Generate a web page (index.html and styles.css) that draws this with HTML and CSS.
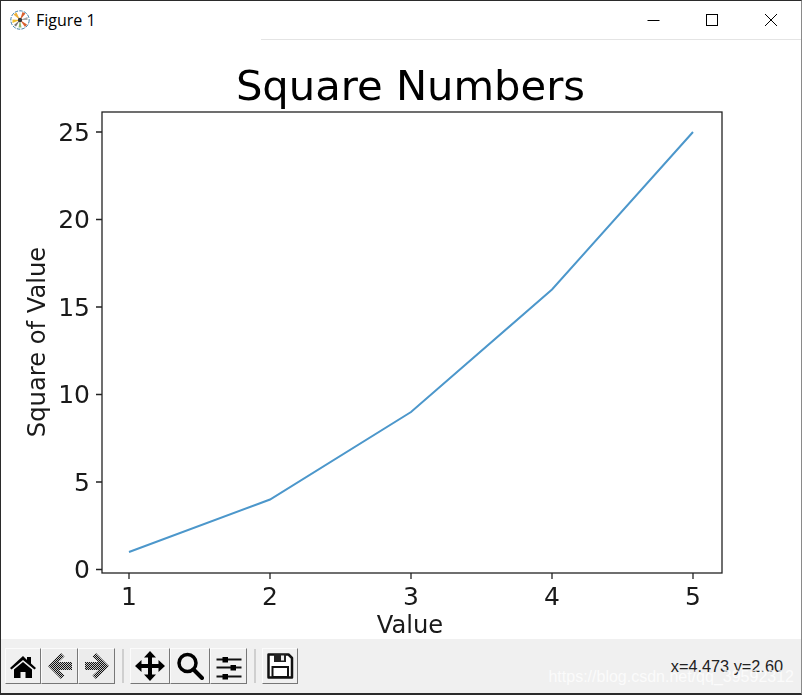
FILE: index.html
```html
<!DOCTYPE html>
<html lang="en">
<head>
<meta charset="utf-8">
<title>Figure 1</title>
<link rel="stylesheet" href="styles.css">
</head>
<body>
<div class="window">
  <header class="titlebar">
    <div class="title-left">
      <svg class="app-icon" width="20" height="20" viewBox="0 0 20 20">
        <circle cx="10" cy="10" r="9.200" fill="#fff" stroke="#3f7fa6" stroke-width="1" stroke-dasharray="3.500 1.200"/>
        <path d="M10 10L6.500 2.500L3.500 4.500Z" fill="#eeb23a"/>
        <path d="M10 10L12.500 2L15.500 3.500Z" fill="#d8602f"/>
        <path d="M10 10L2.500 9.500L2.500 13Z" fill="#f0c030"/>
        <path d="M10 10L17 14.500L15 17Z" fill="#d8602f"/>
        <path d="M10 10L11.500 17.500L8.500 17.500Z" fill="#8db86a"/>
        <path d="M10 10L17.500 7L17.500 10Z" fill="#a8a8a8"/>
        <path d="M10 10L4 15L6 16.500Z" fill="#777"/>
        <circle cx="10" cy="10" r="2.200" fill="#3a3a3a"/>
      </svg>
      <span class="title-text">Figure 1</span>
    </div>
    <div class="win-controls">
      <svg class="win-btn" width="14" height="14" viewBox="0 0 14 14"><path d="M1.500 7.500H13.500" stroke="#000" fill="none"/></svg>
      <svg class="win-btn" width="14" height="14" viewBox="0 0 14 14"><rect x="1.500" y="1.500" width="11" height="11" stroke="#000" fill="none"/></svg>
      <svg class="win-btn" width="14" height="14" viewBox="0 0 14 14"><path d="M1 1L13 13M13 1L1 13" stroke="#000" fill="none"/></svg>
    </div>
  </header>
  <main class="figure">
    <svg class="plot" width="800" height="599" viewBox="1 40 800 599">
      <text class="plot-title" x="410.500" y="100" text-anchor="middle">Square Numbers</text>
      <rect class="axes" x="102" y="112" width="620" height="461"/>
      <polyline class="series" points="129,552 270,499.500 411,412 552,289.500 693,132"/>
      <g class="ticks">
        <path d="M129 573v6M270 573v6M411 573v6M552 573v6M693 573v6"/>
        <path d="M102 569.500h-6M102 482h-6M102 394.500h-6M102 307h-6M102 219.500h-6M102 132h-6"/>
      </g>
      <g class="tick-label">
        <text x="129" y="605" text-anchor="middle">1</text>
        <text x="270" y="605" text-anchor="middle">2</text>
        <text x="411" y="605" text-anchor="middle">3</text>
        <text x="552" y="605" text-anchor="middle">4</text>
        <text x="693" y="605" text-anchor="middle">5</text>
        <text x="90" y="578" text-anchor="end">0</text>
        <text x="90" y="491" text-anchor="end">5</text>
        <text x="90" y="403" text-anchor="end">10</text>
        <text x="90" y="316" text-anchor="end">15</text>
        <text x="90" y="228" text-anchor="end">20</text>
        <text x="90" y="141" text-anchor="end">25</text>
      </g>
      <text class="axis-label" x="410" y="633" text-anchor="middle">Value</text>
      <text class="axis-label" transform="translate(45 342) rotate(-90)" text-anchor="middle">Square of Value</text>
    </svg>
  </main>
  <footer class="toolbar">
    <svg class="defs" width="0" height="0">
      <defs>
        <pattern id="stipple" width="2" height="2" patternUnits="userSpaceOnUse">
          <rect width="2" height="2" fill="#c8c8c8"/>
          <rect width="1" height="1" fill="#111"/>
          <rect x="1" y="1" width="1" height="1" fill="#111"/>
        </pattern>
      </defs>
    </svg>
    <div class="tools">
      <div class="tool-group">
        <button class="tool">
          <svg class="icon" width="28" height="28" viewBox="0 0 28 28"><path d="M14 4L1 16l1.500 1.500L14 8l11.500 9.500L27 16l-5-4.500V5h-4v3Z" fill="#000"/><path d="M5 17.500L14 10l9 7.500V26h-6.500v-6h-5v6H5Z" fill="#000"/></svg>
        </button>
        <button class="tool tool-off tool-mid">
          <svg class="icon" width="28" height="28" viewBox="0 0 28 28"><path d="M15 1L2 14l13 13 3.500-3.500-6-5.500H26v-8H12.500l6-5.500Z" fill="url(#stipple)"/></svg>
        </button>
        <button class="tool tool-off tool-mid">
          <svg class="icon" width="28" height="28" viewBox="0 0 28 28"><path d="M13 1l13 13-13 13-3.500-3.500 6-5.500H2v-8h13.500l-6-5.500Z" fill="url(#stipple)"/></svg>
        </button>
      </div>
      <span class="sep"></span>
      <div class="tool-group">
        <button class="tool tool-wide">
          <svg class="icon" width="30" height="30" viewBox="0 0 30 30"><path d="M15 0l6 6.500h-4V13h6.500V9l6.500 6-6.500 6v-4H17v6.500h4L15 30l-6-6.500h4V17H6.500v4L0 15l6.500-6v4H13V6.500H9Z" fill="#000"/></svg>
        </button>
        <button class="tool tool-wide">
          <svg class="icon" width="28" height="28" viewBox="0 0 28 28"><circle cx="11.500" cy="11" r="8.500" fill="none" stroke="#000" stroke-width="3.500"/><path d="M17.500 17.500L26 26" stroke="#000" stroke-width="4" stroke-linecap="round"/></svg>
        </button>
        <button class="tool tool-mid">
          <svg class="icon" width="28" height="28" viewBox="0 0 28 28"><path d="M1.500 7.500H26.500M1.500 15.500H26.500M1.500 24.500H26.500" stroke="#111" stroke-width="1.800"/><rect x="7.500" y="5" width="5.500" height="5.500" fill="#000"/><rect x="15.500" y="13" width="5.500" height="5.500" fill="#000"/><rect x="7.500" y="22" width="5.500" height="5.500" fill="#000"/></svg>
        </button>
      </div>
      <span class="sep"></span>
      <button class="tool">
        <svg class="icon" width="28" height="28" viewBox="0 0 28 28"><path d="M2.500 2.500H22.500L26 6V25.500H2.500Z" fill="#fff" stroke="#111" stroke-width="2.500" stroke-linejoin="round"/><rect x="8" y="2" width="12" height="8" fill="#222"/><rect x="15" y="3.500" width="3" height="5" fill="#eee"/><rect x="6.500" y="15" width="15.500" height="10" fill="#fff" stroke="#111" stroke-width="2"/></svg>
      </button>
    </div>
    <div class="status">
      <span class="coords">x=4.473 y=2.60</span>
      <span class="watermark">https://blog.csdn.net/qq_39592312</span>
    </div>
  </footer>
</div>
</body>
</html>
```
FILE: styles.css
```css
* { box-sizing: border-box; }
html, body { margin: 0; padding: 0; background: #fff; }
.window {
  width: 802px;
  height: 695px;
  display: flex;
  flex-direction: column;
  border-top: 1px solid #2b2b2b;
  border-left: 1px solid #2b2b2b;
  border-right: 1px solid #8a8a8a;
  border-bottom: 2px solid #2b2b2b;
  overflow: hidden;
}
.titlebar {
  height: 39px;
  flex: none;
  display: flex;
  align-items: center;
  justify-content: space-between;
  background: #fff;
  position: relative;
}
.titlebar::after {
  content: "";
  position: absolute;
  left: 260px;
  right: 0;
  bottom: 0;
  height: 1px;
  background: #e4e4e4;
}
.title-left { display: flex; align-items: center; gap: 5px; padding-left: 9px; margin-top: -2px; }
.app-icon { display: block; }
.title-text { font: 16px "Open Sans", "Noto Sans", sans-serif; color: #000; margin-left: 1px; }
.win-controls { display: flex; gap: 45px; padding-right: 23px; margin-top: -1px; }
.win-btn { display: block; }
.figure { flex: none; height: 599px; background: #fff; }
.plot { display: block; filter: blur(0.3px); }
.plot-title { font: 41.700px "DejaVu Sans", sans-serif; fill: #000; }
.axes { fill: #fff; stroke: #222; stroke-width: 1.300; }
.series { fill: none; stroke: #4c97cb; stroke-width: 2; }
.ticks path { stroke: #222; stroke-width: 1.300; fill: none; }
.tick-label text { font: 25px "DejaVu Sans", sans-serif; fill: #1a1a1a; }
.axis-label { font: 24.200px "DejaVu Sans", sans-serif; fill: #1a1a1a; }
.toolbar {
  flex: 1;
  background: #f0f0f0;
  display: flex;
  align-items: center;
  justify-content: space-between;
  padding: 0 1px 0 4px;
}
.defs { position: absolute; }
.tools { display: flex; align-items: center; }
.tool-group { display: flex; align-items: center; }
.tool {
  width: 36px;
  height: 36px;
  padding: 0;
  display: flex;
  align-items: center;
  justify-content: center;
  background: #f0f0f0;
  border: 1px solid;
  border-color: #fbfbfb #777 #777 #fbfbfb;
  border-radius: 0;
  flex: none;
}
.tool-mid { width: 37px; }
.tool-wide { width: 40px; }
.tool-off { background: #ececec; }
.icon { display: block; filter: blur(0.4px); }
.sep { width: 2px; height: 34px; margin: 0 6.500px; background: #cfcfcf; }
.status { display: flex; flex-direction: column; align-items: flex-end; margin-top: 11px; }
.coords { font: 16.300px "Liberation Sans", sans-serif; color: #222; line-height: 16px; margin-right: 17px; }
.watermark {
  font: 16px "Liberation Sans", sans-serif;
  line-height: 16px;
  margin-top: -5px;
  margin-right: 6px;
  color: rgba(255, 255, 255, 0.75);
}
```
